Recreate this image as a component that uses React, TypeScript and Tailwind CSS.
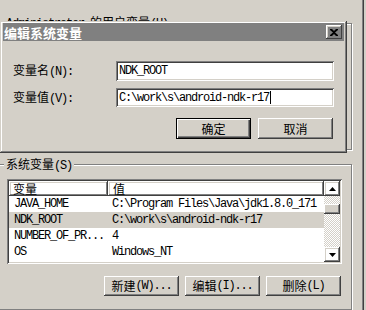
import type { ReactNode } from "react";

const CJK = "font-['Noto_Sans_CJK_SC',sans-serif]";
const MONO = "font-['Liberation_Mono','Noto_Sans_CJK_SC',monospace] text-[12px] tracking-[-1.2px]";
const RAISED =
  "shadow-[inset_-1px_-1px_0_#404040,inset_1px_1px_0_#ffffff,inset_-2px_-2px_0_#808080,inset_2px_2px_0_#d4d0c8]";
const SUNKEN =
  "shadow-[inset_1px_1px_0_#808080,inset_-1px_-1px_0_#ffffff,inset_2px_2px_0_#404040,inset_-2px_-2px_0_#d4d0c8]";
const ETCHED = "border border-[#808080] shadow-[inset_1px_1px_0_#ffffff,1px_1px_0_#ffffff]";
const CHECKER = "bg-[repeating-conic-gradient(#d4d0c8_0%_25%,#ffffff_0%_50%)] bg-[length:2px_2px]";

function M({ children }: { children: ReactNode }) {
  return <span className={MONO}>{children}</span>;
}

function Button({ children, isDefault = false, h = "h-[20px]" }: { children?: ReactNode; isDefault?: boolean; h?: string }) {
  const edge = isDefault
    ? "border border-black shadow-[inset_1px_1px_0_#ffffff,inset_-1px_-1px_0_#404040,inset_-2px_-2px_0_#808080]"
    : RAISED;
  return (
    <div className={`flex ${h} w-[75px] items-center justify-center text-[12px] leading-none text-black ${CJK} ${edge}`}>
      {children}
    </div>
  );
}

function Arrow({ down = false }: { down?: boolean }) {
  return (
    <svg width="7" height="4" viewBox="0 0 7 4" className={down ? "rotate-180" : ""}>
      <polygon points="3.5,0 7,4 0,4" fill="#000" />
    </svg>
  );
}

const rows = [
  { name: "JAVA_HOME", value: "C:\\Program Files\\Java\\jdk1.8.0_171" },
  { name: "NDK_ROOT", value: "C:\\work\\s\\android-ndk-r17", selected: true },
  { name: "NUMBER_OF_PR...", value: "4" },
  { name: "OS", value: "Windows_NT" },
];

export default function App() {
  return (
    <div className={`relative h-[310px] w-[366px] overflow-hidden bg-[#d4d0c8] text-black ${CJK}`}>
      {/* window behind the dialog */}
      <div className="flex h-full">
        <div className="-ml-[4px] flex w-[356px] flex-col pt-[23px]">
          <div className={`relative flex h-[140px] flex-col justify-end pb-[7px] pr-[10px] ${ETCHED}`}>
            <span className="absolute -top-[9px] left-[8px] bg-[#d4d0c8] px-[1px] text-[12px] leading-[14px]">
              <M>Administrator </M>的用户变量<M>(U)</M>
            </span>
            {/* buttons of the user list, hidden by the dialog except their lower edge */}
            <div className="ml-auto flex gap-[6px]">
              <Button />
              <Button />
              <Button />
            </div>
          </div>

          <div className={`relative mt-[14px] flex h-[160px] flex-col pl-[10px] pr-[10px] pt-[14px] ${ETCHED}`}>
            <span className="absolute -top-[8px] left-[7px] bg-[#d4d0c8] px-[2px] text-[12px] leading-[14px]">
              系统变量<M>(S)</M>
            </span>

            <div className={`flex h-[85px] w-[335px] bg-white p-[2px] ${SUNKEN}`}>
              <div className="flex flex-1 flex-col">
                <div className="flex h-[15px] text-[12px] leading-none">
                  <div className={`flex w-[99px] items-center pl-[4px] ${RAISED}`}>变量</div>
                  <div className={`flex flex-1 items-center pl-[5px] ${RAISED}`}>值</div>
                </div>
                {rows.map((r) => (
                  <div key={r.name} className={`flex h-[16px] items-center ${r.selected ? "bg-[#d4d0c8]" : ""}`}>
                    <div className={`w-[99px] pl-[5px] leading-none ${MONO}`}>{r.name}</div>
                    <div className={`pl-[4px] leading-none ${MONO}`}>{r.value}</div>
                  </div>
                ))}
              </div>
              <div className="flex w-[16px] flex-col">
                <div className={`flex h-[15px] items-center justify-center ${RAISED}`}>
                  <Arrow />
                </div>
                <div className={`h-[8px] ${CHECKER}`} />
                <div className={`h-[10px] bg-[#d4d0c8] ${RAISED}`} />
                <div className={`flex-1 ${CHECKER}`} />
                <div className={`flex h-[15px] items-center justify-center ${RAISED}`}>
                  <Arrow down />
                </div>
              </div>
            </div>

            <div className="ml-auto mt-[12px] flex gap-[6px]">
              <Button>
                新建<M>(W)...</M>
              </Button>
              <Button>
                编辑<M>(I)...</M>
              </Button>
              <Button>
                删除<M>(L)</M>
              </Button>
            </div>
          </div>
        </div>
        <div className="ml-[10px] w-[1px] bg-[#808080]" />
        <div className="w-[1px] bg-[#404040]" />
      </div>

      {/* edit dialog on top */}
      <div className="absolute left-0 top-[21px] flex h-[132px] w-[347px] flex-col bg-[#d4d0c8] px-[3px] pt-[2px] shadow-[inset_-1px_-1px_0_#404040,inset_1px_1px_0_#d4d0c8,inset_-2px_-2px_0_#808080,inset_2px_2px_0_#ffffff]">
        <div className="flex h-[18px] items-center justify-between bg-[#808080] pl-[1px] pr-[2px]">
          <span className="text-[13px] font-bold leading-none text-white">编辑系统变量</span>
          <div className={`flex h-[14px] w-[16px] items-center justify-center ${RAISED}`}>
            <svg width="8" height="7" viewBox="0 0 8 7">
              <path d="M0 0h2l2 2 2-2h2v1L5 3.5 8 6v1H6L4 5 2 7H0V6l3-2.5L0 1z" fill="#000" />
            </svg>
          </div>
        </div>

        <div className="flex flex-col pl-[10px]">
          <div className="mt-[20px] flex items-center">
            <div className="w-[103px] text-[12px] leading-none">
              变量名<M>(N):</M>
            </div>
            <div className={`flex h-[20px] w-[218px] items-center bg-white pl-[3px] ${SUNKEN}`}>
              <span className={`leading-none ${MONO}`}>NDK_ROOT</span>
            </div>
          </div>
          <div className="mt-[7px] flex items-center">
            <div className="w-[103px] text-[12px] leading-none">
              变量值<M>(V):</M>
            </div>
            <div className={`flex h-[19px] w-[218px] items-center bg-white pl-[3px] ${SUNKEN}`}>
              <span className={`leading-none ${MONO}`}>C:\work\s\android-ndk-r17</span>
              <span className="ml-[1px] h-[13px] w-[1px] bg-black" />
            </div>
          </div>
          <div className="mt-[11px] flex justify-end gap-[7px] pr-[11px]">
            <Button isDefault h="h-[21px]">
              确定
            </Button>
            <Button h="h-[21px]">取消</Button>
          </div>
        </div>
      </div>
    </div>
  );
}
